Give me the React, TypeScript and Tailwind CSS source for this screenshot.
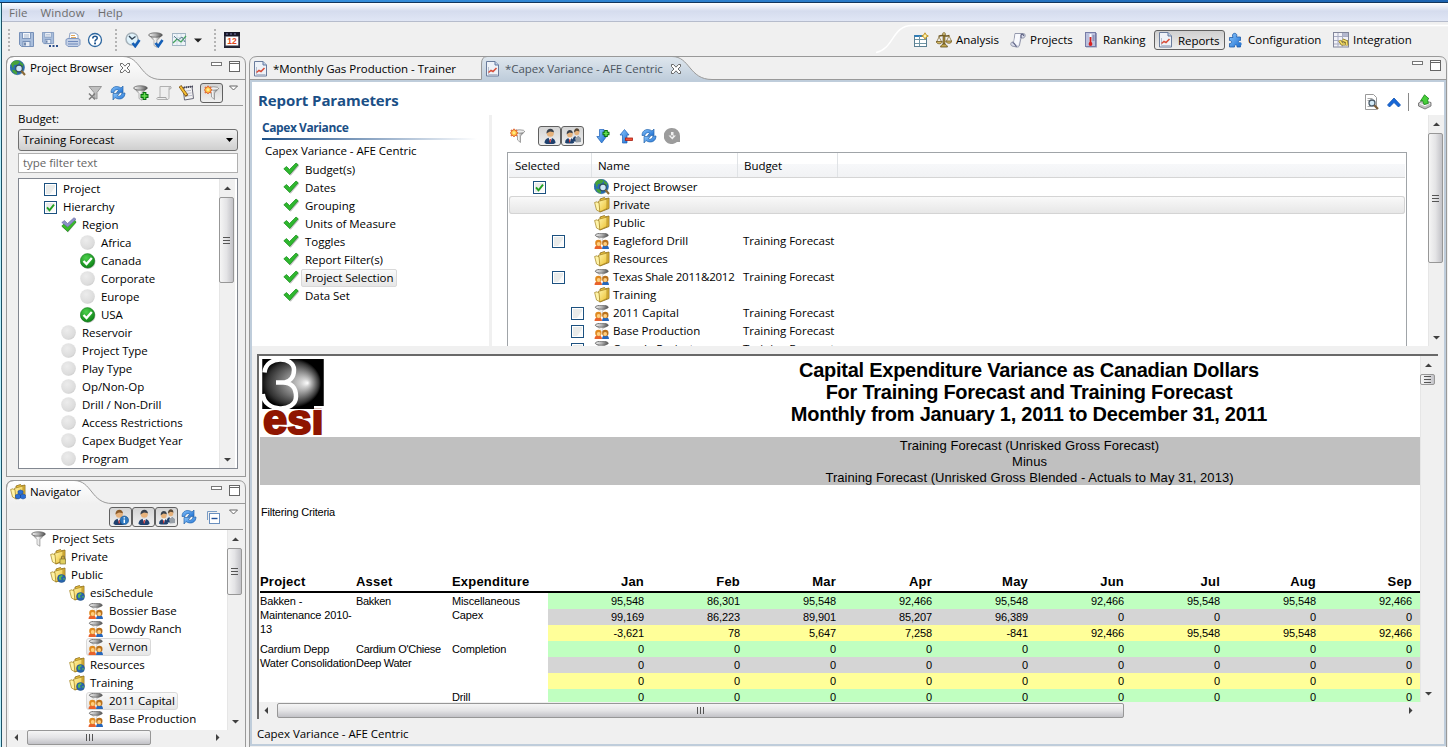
import React from "react";

type Kids = { children?: React.ReactNode };

function Svg({ children, w = 16, h = 16, c = "" }: Kids & { w?: number; h?: number; c?: string }) {
  return (
    <svg width={w} height={h} viewBox={`0 0 ${w} ${h}`} className={`shrink-0 ${c}`}>
      {children}
    </svg>
  );
}

/* ---------- gradients shared by the icons ---------- */
function Defs() {
  return (
    <svg width="0" height="0" className="absolute">
      <defs>
        <linearGradient id="metal" x1="0" x2="1" y1="0" y2="0">
          <stop offset="0" stopColor="#6e6e6e" />
          <stop offset="0.45" stopColor="#fafafa" />
          <stop offset="1" stopColor="#5c5c5c" />
        </linearGradient>
        <linearGradient id="rim" x1="0" x2="1" y1="0" y2="0">
          <stop offset="0" stopColor="#f4f4f4" />
          <stop offset="0.5" stopColor="#b0b0b0" />
          <stop offset="1" stopColor="#505050" />
        </linearGradient>
        <linearGradient id="gold" x1="0" x2="1" y1="0" y2="1">
          <stop offset="0" stopColor="#fff6b0" />
          <stop offset="1" stopColor="#ecc02e" />
        </linearGradient>
        <linearGradient id="blueArrow" x1="0" x2="1" y1="0" y2="1">
          <stop offset="0" stopColor="#8cc8ff" />
          <stop offset="1" stopColor="#1e6fd0" />
        </linearGradient>
        <radialGradient id="grayBall" cx="0.4" cy="0.35" r="0.7">
          <stop offset="0" stopColor="#ececec" />
          <stop offset="0.8" stopColor="#dcdcdc" />
          <stop offset="1" stopColor="#c8c8c8" />
        </radialGradient>
        <radialGradient id="greenBall" cx="0.4" cy="0.3" r="0.8">
          <stop offset="0" stopColor="#4cd04c" />
          <stop offset="1" stopColor="#067a10" />
        </radialGradient>
        <radialGradient id="sphere" cx="0.46" cy="0.48" r="0.5" fx="0.74" fy="0.48">
          <stop offset="0" stopColor="#ffffff" />
          <stop offset="0.15" stopColor="#d0d0d0" />
          <stop offset="0.5" stopColor="#808080" />
          <stop offset="0.85" stopColor="#303030" />
          <stop offset="1" stopColor="#000000" />
        </radialGradient>
        <linearGradient id="tabWhite" x1="0" x2="0" y1="0" y2="1">
          <stop offset="0" stopColor="#ffffff" />
          <stop offset="1" stopColor="#f0f0f0" />
        </linearGradient>
        <linearGradient id="tabBlue" x1="0" x2="0" y1="0" y2="1">
          <stop offset="0" stopColor="#dfe7ee" />
          <stop offset="1" stopColor="#bfcddb" />
        </linearGradient>
        <clipPath id="belowSphere"><rect x="0" y="50.500" width="66" height="28" /></clipPath>
      </defs>
    </svg>
  );
}

/* ---------- icons ---------- */
const FloppyShape = () => (
  <>
    <path d="M.5.5h14v14h-12l-2-2z" fill="#a9bedc" stroke="#7690b8" />
    <rect x="3.500" y=".5" width="8" height="6" fill="#f4f7fb" stroke="#7f98bd" />
    <path d="M5 3h5M5 5h5" stroke="#a9b9d0" />
    <rect x="4" y="9.500" width="7" height="5" fill="#e6ecf5" stroke="#7690b8" />
    <path d="M6 10.500v3" stroke="#4f6c98" strokeWidth="1.500" />
  </>
);
const Save = () => <Svg><FloppyShape /></Svg>;
const SaveAll = () => (
  <Svg>
    <g transform="scale(.8)"><FloppyShape /></g>
    <path d="M7 14h2M10.500 14h2M14 14h2" stroke="#2c4f8c" strokeWidth="1.800" />
  </Svg>
);
const Print = () => (
  <Svg>
    <path d="M4 7L5 1h5l3 2v4" fill="#fff" stroke="#8fa3c4" />
    <path d="M6 3.500h4M6 5.500h5" stroke="#e0a860" />
    <path d="M1 7.500l2-1h10l2 1v5l-2 2H3l-2-2z" fill="#c3d0e6" stroke="#7f97c0" />
    <path d="M3 9.500h10M3 12h10" stroke="#6f8abc" />
  </Svg>
);
const Help = () => (
  <Svg>
    <circle cx="8" cy="8" r="6.500" fill="#fff" stroke="#2d67a0" strokeWidth="1.300" />
    <path d="M5.800 6.400c0-3 4.600-2.800 4.400-.2-.1 1.500-2.200 1.500-2.200 3.300" fill="none" stroke="#1d5590" strokeWidth="1.600" />
    <rect x="7.100" y="10.500" width="1.900" height="1.800" fill="#1d5590" />
  </Svg>
);
const BlueTick = () => <path d="M7.500 11l2.700 3.200L14.500 8" fill="none" stroke="#1560b8" strokeWidth="2.600" />;
const ClockCheck = () => (
  <Svg>
    <circle cx="7" cy="7" r="6" fill="#dff2fb" stroke="#a6b2ba" strokeWidth="1.500" />
    <path d="M4 4l3 3 3.500-2.500" fill="none" stroke="#345" strokeWidth="1.400" />
    <BlueTick />
  </Svg>
);
const FunnelShape = () => (
  <>
    <path d="M.8 3l5.200 5.500v5l3 1.800V8.500L14.200 3z" fill="url(#metal)" stroke="#777" strokeWidth=".5" />
    <ellipse cx="7.500" cy="3" rx="6.800" ry="2.200" fill="url(#rim)" stroke="#555" strokeWidth=".7" />
  </>
);
const FunnelCheck = () => <Svg><FunnelShape /><BlueTick /></Svg>;
const Funnel = () => <Svg><FunnelShape /></Svg>;
const FunnelX = () => (
  <Svg>
    <path d="M2 1.500h12.500L10 7.500V14l-3-1.500V7.500z" fill="#c0c0c0" stroke="#969696" />
    <path d="M2 8.500l6 6M8 8.500l-6 6" stroke="#7e7e7e" strokeWidth="1.600" />
  </Svg>
);
const FunnelPlus = () => (
  <Svg>
    <FunnelShape />
    <path d="M7.500 11h8M11.500 7v8" stroke="#08700f" strokeWidth="3.800" />
    <path d="M8.500 11h6M11.500 8v6" stroke="#66e050" strokeWidth="1.600" />
  </Svg>
);
const FunnelStar = () => (
  <Svg>
    <path d="M3 3.500h11.500L10.500 8v6.500L7.500 12V8z" fill="url(#metal)" stroke="#777" strokeWidth=".6" />
    <ellipse cx="9.500" cy="3.500" rx="5.200" ry="1.700" fill="#ededed" stroke="#666" strokeWidth=".6" />
    <path d="M4 .8l1 1.700 2-.5-.5 2L8 5 6.500 5.800 7 8 5 7.300 4 9 3 7.300 1 8l.5-2.200L.2 5l1.300-1L1 2l2 .5z" fill="#ffc23c" stroke="#e0602c" strokeWidth=".9" />
    <circle cx="4" cy="4.800" r="1.500" fill="#ffe98c" />
  </Svg>
);
const ChartIcon = () => (
  <Svg>
    <rect x="1.500" y="1.500" width="13" height="12" fill="#eef4f8" stroke="#a3b5c4" />
    <path d="M2 5.500h12M2 9.500h12M6 2v11M10 2v11" stroke="#d2dee8" />
    <path d="M2 11l4-4 4 3 5-6" fill="none" stroke="#45a55c" strokeWidth="1.200" />
    <path d="M3 4l4 4 4-3 3 5" fill="none" stroke="#5f7f92" strokeWidth="1" />
  </Svg>
);
const Calendar = () => (
  <Svg>
    <rect x=".5" y=".5" width="15" height="15" fill="#fff" stroke="#1a1a28" />
    <rect x="0" y="0" width="16" height="4.500" fill="#171728" />
    <path d="M0 14.500h16" stroke="#282838" strokeWidth="2" />
    <path d="M1 4v10M15 4v10" stroke="#383848" strokeWidth="1.500" />
    <path d="M2 2h2M6 2h2M10 2h2" stroke="#8080b0" />
    <text x="8" y="12" fontSize="8.500" fontWeight="700" textAnchor="middle" fill="#e2481c" fontFamily="Liberation Sans">12</text>
  </Svg>
);
const GlobeSearch = () => (
  <Svg>
    <circle cx="7.300" cy="7.500" r="7.200" fill="#276cb8" stroke="#225a80" strokeWidth=".5" />
    <path d="M1 4c2-4 7-4.500 9-2L7.500 4.500 4 5l-1 4zM10 1.500l3.500 3-1 3-2.500-2zM2 9.500l5 1v4C4 14 2 12 2 9.500z" fill="#46a23a" />
    <circle cx="9" cy="8.500" r="3.300" fill="#cfe6f5" stroke="#33505e" strokeWidth="1.200" />
    <path d="M11.500 11l3.500 4" stroke="#8a6a38" strokeWidth="2" />
  </Svg>
);
const CloseX = () => (
  <Svg w={12} h={12}>
    <path d="M1.500 1.500h2l2.500 2.700 2.500-2.700h2v2L8 6l2.500 2.500v2h-2L6 7.800l-2.500 2.700h-2v-2L4 6 1.500 3.500z" fill="#fff" stroke="#5a5a5a" strokeWidth=".9" />
  </Svg>
);
const Refresh = () => (
  <Svg>
    <path d="M1 7.500C1 1.500 7 0 11 3L13 1v6.500H6.500L8.700 5.300C7 4 4.500 4.500 4 7.500z" fill="url(#blueArrow)" stroke="#2566ae" strokeWidth=".7" />
    <path d="M15 8c0 6-6 7.500-10 4.500L3 15V8.500h6.500L7.300 10.500C9 12 11.500 11 12 8z" fill="url(#blueArrow)" stroke="#2566ae" strokeWidth=".7" />
  </Svg>
);
const ScrollGray = () => (
  <Svg>
    <path d="M4 1.500h10.500c-1 0-1.500 1-1.500 2v9c0 1.500-1 2-2 2H1.500c-1 0-1-2 .5-2H4z" fill="#eee" stroke="#b0b0b0" />
    <path d="M2 12.500h8c0 1 .5 2 1.500 2M14 1.500c1.500 0 1.500 2.500 0 2.500h-1" fill="none" stroke="#a4a4a4" />
  </Svg>
);
const Notepad = () => (
  <Svg>
    <path d="M4 2.500l9-1 1.500 12-9 1.500z" fill="#f2f2f2" stroke="#667" />
    <path d="M5 2.500l9-1" stroke="#445" strokeWidth="2" strokeDasharray="1 1" />
    <path d="M7 6l5-.6M7.500 8.500l5-.6M8 11l5-.6" stroke="#bbc" />
    <path d="M1 1l7 10" stroke="#7a5010" strokeWidth="3.200" />
    <path d="M1.300 1.500l6 8.500" stroke="#f4bd34" strokeWidth="2" />
  </Svg>
);
const Tick = () => (
  <Svg>
    <path d="M1 8l2.500-2 3 3.200L13 2l2.500 2L7 14z" fill="#888" opacity=".5" transform="translate(.7 .7)" />
    <path d="M.8 7.800l2.700-2.300 3 3L13 2l2.200 1.800L6.700 13.500z" fill="#2eb82e" stroke="#148a18" strokeWidth=".7" />
  </Svg>
);
const RegionTick = () => (
  <Svg>
    <path d="M1 10l2.500-2 3 3L14 4l1.500 1.500L7 15.500z" fill="#888" opacity=".6" />
    <path d="M.8 9l2.700-2.500 3 3.500L13.500 3l1.500 2-8.300 9.500z" fill="#3abb28" stroke="#198818" strokeWidth=".7" />
    <path d="M.8 5.500l2.700-2 3 3L13 .7l2 1.500L6.700 10z" fill="#8b8fc8" stroke="#666aa0" strokeWidth=".6" />
  </Svg>
);
const Ball = () => <Svg><circle cx="7.500" cy="7.500" r="7.300" fill="url(#grayBall)" /></Svg>;
const BallTick = () => (
  <Svg>
    <circle cx="8.200" cy="8.700" r="7.200" fill="#999" opacity=".6" />
    <circle cx="7.500" cy="7.800" r="7.200" fill="url(#greenBall)" stroke="#0a7012" strokeWidth=".5" />
    <path d="M3.500 8l3 3 5.300-6" fill="none" stroke="#fff" strokeWidth="2.300" />
  </Svg>
);
const FolderShape = () => (
  <>
    <path d="M6 2l4.500-1.500 1 1.300 3.500-.8v10.500L6 15z" fill="#e6bd3c" stroke="#8a6a18" strokeWidth=".8" />
    <path d="M4 4.500l9-2.500v9.500L5.500 15z" fill="url(#gold)" stroke="#a08020" strokeWidth=".7" />
    <path d="M.6 5.500l2.400-.7 1 1 1-.3.800 9.200L2.500 13z" fill="#fff4a8" stroke="#a08020" strokeWidth=".7" />
  </>
);
const Folder = () => <Svg><FolderShape /></Svg>;
const FolderLock = () => (
  <Svg>
    <FolderShape />
    <path d="M11.500 10V8.500c0-2 3-2 3 0V10" fill="none" stroke="#8a7a3a" strokeWidth="1.200" />
    <rect x="10" y="10" width="5.500" height="5" fill="#e0cf60" stroke="#7f7030" strokeWidth=".7" />
  </Svg>
);
const FolderGlobe = () => (
  <Svg>
    <FolderShape />
    <circle cx="11.500" cy="11.500" r="4" fill="#2765b0" stroke="#1e4c80" strokeWidth=".5" />
    <path d="M9 9.500l2.500-1.500 1.500 1-2 1.500.5 2.500-2.500-.5zM13 11l2 .5-1 2z" fill="#5bb84a" />
  </Svg>
);
const FolderNav = () => (
  <Svg>
    <FolderShape />
    <path d="M10.500 6l2.500 1v2.500l-2.500 1-2.500-1V7zM8 10l2.500 1v3L8 15l-2.500-1v-3zM13 10l2.500 1v3L13 15l-2.500-1v-3z" fill="#2a6fd6" stroke="#174a9c" strokeWidth=".6" />
  </Svg>
);
const Team = () => (
  <Svg>
    <path d="M1.500 2.500L6 6.500V9h3V6l5-3.500z" fill="url(#metal)" />
    <ellipse cx="7.800" cy="2.200" rx="6.500" ry="2" fill="url(#rim)" stroke="#606060" strokeWidth=".8" />
    <path d="M.5 16c0-5.500 7.500-5.500 7.500 0z" fill="#e8622c" />
    <path d="M8 16c0-5.500 7-5.500 7 0z" fill="#2767bc" />
    <circle cx="4.400" cy="10" r="3.200" fill="#e08a20" />
    <circle cx="11.300" cy="10" r="3.200" fill="#b8701c" />
    <circle cx="4.700" cy="11" r="1.900" fill="#ffcf80" />
    <circle cx="11.200" cy="11" r="1.900" fill="#ffcf80" />
  </Svg>
);
const PersonShape = ({ hair = "#39414c" }: { hair?: string }) => (
  <>
    <path d="M2.500 15c0-7 11-7 11 0l-2 1h-7z" fill="#1f416e" />
    <path d="M6.500 9.500h3.500l-1.500 5z" fill="#fff" />
    <path d="M8 10.500l1 1-.7 3.500-1-1z" fill="#d02525" />
    <circle cx="8.300" cy="5.300" r="3.500" fill="#e6b27c" />
    <path d="M4.500 5.500C4-.5 12-1 12 4.500L11 4 8 3.500l-2 1z" fill={hair} />
  </>
);
const Person = () => <Svg><PersonShape /></Svg>;
const PersonInfo = () => (
  <Svg>
    <g transform="translate(-2)"><PersonShape hair="#8a5a28" /></g>
    <circle cx="11.300" cy="11.300" r="4.300" fill="#2d78c0" stroke="#1a5088" strokeWidth=".6" />
    <path d="M11.300 10.500v3.500M11.300 8.200v1.400" stroke="#fff" strokeWidth="1.500" />
  </Svg>
);
const People = () => (
  <Svg>
    <g transform="translate(5.800 -.2) scale(.72 .85)"><PersonShape hair="#5a4a38" /></g>
    <path d="M10 10l3-2 3 2v4l-5 .5z" fill="#98a0a8" />
    <g transform="translate(-2 1.500) scale(.82 .88)"><PersonShape /></g>
  </Svg>
);
const CollapseAll = () => (
  <Svg>
    <path d="M2.500 11V2.500H12" fill="none" stroke="#7a9cc4" />
    <rect x="4.500" y="4.500" width="10" height="10" fill="#fff" stroke="#6a8fbe" />
    <path d="M6.500 9.500h6" stroke="#1f4f98" strokeWidth="1.400" />
  </Svg>
);
const ReportDoc = () => (
  <Svg>
    <path d="M1.500.5h8.500l3.500 3.500v11H1.500z" fill="#eef2f8" stroke="#6a7c9c" />
    <path d="M10 .5V4h3.500" fill="#c4d2e6" stroke="#6078a0" />
    <path d="M3.500 6v7.500h9" fill="none" stroke="#b4bece" />
    <path d="M3.500 11.500l2.500-2 2 1L11.500 7" fill="none" stroke="#d8503c" strokeWidth="1.600" />
  </Svg>
);
const DownPlus = () => (
  <Svg>
    <path d="M3.500 1.500h4.500v7h2.500L5.700 15 .8 8.500h2.700z" fill="url(#blueArrow)" stroke="#1b5eb8" strokeWidth=".7" />
    <path d="M6.500 5.500h7M10 2v7" stroke="#08700f" strokeWidth="3.600" />
    <path d="M7.500 5.500h5M10 3v5" stroke="#66e050" strokeWidth="1.500" />
  </Svg>
);
const UpMinus = () => (
  <Svg>
    <path d="M5.500 1.500L10 7H8v8H3.500V7H1z" fill="url(#blueArrow)" stroke="#1b5eb8" strokeWidth=".7" />
    <rect x="6.500" y="10" width="7" height="2.500" fill="#f05038" stroke="#a81c10" strokeWidth=".8" />
  </Svg>
);
const GrayDisc = () => (
  <Svg>
    <path d="M8 0a8 8 0 1 0 5 14h3V8a8 8 0 0 0-8-8z" fill="#9c9c9c" />
    <path d="M7 4h2.500v3.500H12l-3.700 4-3.800-4H7z" fill="#efefef" />
    <circle cx="8" cy="8" r=".9" fill="#9c9c9c" />
  </Svg>
);
const DocSearch = () => (
  <Svg>
    <path d="M1.500.5h8l3 3v12h-11z" fill="#fff" stroke="#9a9a9a" />
    <path d="M3.500 4.500h5M3.500 6.500h2M3.500 12.500h3" stroke="#aaa" />
    <circle cx="8" cy="9" r="3" fill="#d4ebf8" stroke="#4a5a68" strokeWidth="1.300" />
    <path d="M10.300 11.300L14 15" stroke="#7a5c38" strokeWidth="2.200" />
  </Svg>
);
const ChevronUp = () => (
  <Svg>
    <path d="M1.500 11L8 4l6.500 7-2 2L8 8.500 3.500 13z" fill="#1668d8" stroke="#0f50b0" strokeWidth=".8" />
  </Svg>
);
const ExportIcon = () => (
  <Svg>
    <path d="M1.500 9l4-2.500 8.500 2v3.500L8 15l-6.500-3z" fill="#c0c0c0" stroke="#666" strokeWidth=".8" />
    <path d="M3 9.500l5 2.200 5-2.700" fill="none" stroke="#fff" />
    <path d="M7.500.8l4.500 4-1.500.7.800 4-4.300 1-1.500-4L3.500 7z" fill="#48cf3a" stroke="#168418" strokeWidth=".8" />
  </Svg>
);
const NewPerspective = () => (
  <Svg>
    <rect x="1.500" y="3.500" width="12" height="11" fill="#fff" stroke="#5a7f92" />
    <path d="M1.500 4h9" stroke="#2f7cb8" strokeWidth="2" />
    <path d="M2 7.500h11M6.500 4v10M2 11.500h4M7 11.500h6" stroke="#6f95a5" />
    <path d="M12 .8l1 2 2.300 1.200-2.300 1.200-1 2-1-2L8.700 4 11 2.800z" fill="#fff4a8" stroke="#c08c18" strokeWidth=".9" />
  </Svg>
);
const Scale = () => (
  <Svg>
    <path d="M7 2h2v10h-2z" fill="#a58a3c" stroke="#5f4a18" strokeWidth=".6" />
    <path d="M2.500 4.500C6 2 10 5 13.500 3.500" fill="none" stroke="#6f5820" strokeWidth="1.500" />
    <path d="M3 5L.8 9.500M3 5l2.500 4.500M13 4l-2.500 5M13 4l2.500 5" fill="none" stroke="#8a7236" strokeWidth=".8" />
    <path d="M0 9.500h6.300c-.5 3-5.500 3-6.300 0zM9.700 9H16c-.5 3-5.500 3-6.300 0z" fill="#d4b964" stroke="#705820" strokeWidth=".8" />
    <path d="M4.500 15c1-4 6-4 7 0z" fill="#c4a850" stroke="#604c18" strokeWidth=".8" />
    <circle cx="8" cy="2" r="1.400" fill="#e6d48a" stroke="#604c18" strokeWidth=".6" />
  </Svg>
);
const ProjectsIcon = () => (
  <Svg>
    <path d="M5 1.500h8.500c2.500 0 2 4.500-.3 4.500H11l-1.500 7c-.4 2-1.500 2.200-3 2L2 14C-.2 13 .8 9.500 3 10l.8.200z" fill="#d9dceb" stroke="#8a8ea4" strokeWidth=".9" />
    <path d="M5.500 2L4 10.500l3 2.500h1.500L10.500 2z" fill="#f8f9fd" />
    <path d="M11 6V3.500c0-2 3-1.500 2.500.5M2.500 10.500c1.800 0 3 3 4 4.300" fill="none" stroke="#5c6080" strokeWidth="1.200" />
  </Svg>
);
const Thermo = () => (
  <Svg>
    <rect x="3" y="1" width="11" height="14.500" fill="#9a9dbc" />
    <rect x="2.500" y=".5" width="10" height="14" fill="#bcc1de" stroke="#777ca6" />
    <rect x="6.500" y="2" width="2" height="8" fill="#fff" />
    <path d="M7.500 5v7" stroke="#d02020" strokeWidth="1.800" />
    <circle cx="7.500" cy="12" r="1.900" fill="#d82020" />
    <path d="M9.500 4h2M9.500 6h2M9.500 8h2" stroke="#4c5080" strokeWidth=".8" />
  </Svg>
);
const Puzzle = () => (
  <Svg>
    <path d="M1.500 5.500H5C2.500 0 10.500 0 8.500 5h4v3.500c-2.500-.8-3 3 0 2.500V15H9c.5-3-3-3-2.500 0H1.500v-3.500c3 .5 2.500-3.500 0-3z" fill="url(#blueArrow)" stroke="#1f5ca8" strokeWidth=".8" />
    <circle cx="12" cy="12" r="1.700" fill="#2f7cd4" />
  </Svg>
);
const IntegrationIcon = () => (
  <Svg>
    <rect x=".5" y=".5" width="15" height="14.500" fill="#f2f2f8" stroke="#82869a" />
    <path d="M1 4.500h14M1 8.500h14M1 12h14M5 1v14M9.500 1v14" stroke="#a8acc2" />
    <rect x="10" y="1" width="5" height="3" fill="#b4b8ce" />
    <path d="M6.500 8.500l2.500 3.500h3M9.500 8l4 1.500.5 4" fill="none" stroke="#84721c" strokeWidth="3" />
    <path d="M6.500 8.500l2.500 3.500h3M9.500 8l4 1.500.5 4" fill="none" stroke="#f4dc6a" strokeWidth="1.600" />
  </Svg>
);

/* ---------- small parts ---------- */
const Check = ({ on = false }: { on?: boolean }) => (
  <Svg w={13} h={13}>
    <rect x=".5" y=".5" width="12" height="12" fill="#fff" stroke="#1c5180" />
    <rect x="2" y="2" width="9" height="9" fill="#e9ebea" />
    <path d="M6 11h5V4z" fill="#fafafa" />
    {on && <path d="M3 6.300l2.500 3L10 3.700" fill="none" stroke="#21a121" strokeWidth="1.900" />}
  </Svg>
);

function Arrow({ dir }: { dir: "up" | "down" | "left" | "right" }) {
  const d = {
    up: "M1 6h7L4.500 2.500z",
    down: "M1 3h7L4.500 6.500z",
    left: "M6 1v7L2.500 4.500z",
    right: "M3 1v7l3.500-3.500z",
  }[dir];
  return <Svg w={9} h={9}><path d={d} fill="#404040" /></Svg>;
}

function VScroll({ c, thumb }: { c: string; thumb: string }) {
  return (
    <div className={`flex shrink-0 flex-col items-start border-l border-[#e6e6e6] bg-[#f0f0f0] ${c}`}>
      <div className="flex h-[18px] shrink-0 items-center pl-[3px]"><Arrow dir="up" /></div>
      <div className={`-ml-px flex w-[15px] shrink-0 flex-col items-center justify-center gap-[2px] rounded-[2px] border border-[#979797] bg-gradient-to-r from-[#f5f5f5] via-[#e4e4e6] to-[#c2c2c7] ${thumb}`}>
        <div className="h-px w-[7px] bg-[#555]" />
        <div className="h-px w-[7px] bg-[#555]" />
        <div className="h-px w-[7px] bg-[#555]" />
      </div>
      <div className="grow" />
      <div className="flex h-[18px] shrink-0 items-center pl-[3px]"><Arrow dir="down" /></div>
    </div>
  );
}

function HScroll({ c, thumb }: { c: string; thumb: string }) {
  return (
    <div className={`flex shrink-0 items-start bg-[#f0f0f0] ${c}`}>
      <div className="flex h-[15px] w-[18px] shrink-0 items-center pl-[3px]"><Arrow dir="left" /></div>
      <div className={`flex h-[15px] shrink-0 items-center justify-center gap-[2px] rounded-[2px] border border-[#979797] bg-gradient-to-b from-[#f5f5f5] via-[#e4e4e6] to-[#c2c2c7] ${thumb}`}>
        <div className="h-[7px] w-px bg-[#555]" />
        <div className="h-[7px] w-px bg-[#555]" />
        <div className="h-[7px] w-px bg-[#555]" />
      </div>
      <div className="grow" />
      <div className="flex h-[15px] w-[18px] shrink-0 items-center pl-[4px]"><Arrow dir="right" /></div>
    </div>
  );
}

const MinMax = () => (
  <div className="flex items-start gap-[7px]">
    <div className="mt-px h-[4px] w-[11px] border border-[#777] bg-white" />
    <div className="h-[11px] w-[11px] border border-[#666] bg-white"><div className="mt-px h-px bg-[#666]" /></div>
  </div>
);

const Triangle = () => (
  <Svg w={11} h={7}><path d="M1.500 1h8l-4 4z" fill="#fff" stroke="#666" /></Svg>
);
const Grip = () => (
  <div className="flex w-[2px] flex-col gap-[2px]">
    {[0, 1, 2, 3, 4, 5].map((i) => <div key={i} className="h-[2px] w-[2px] bg-[#b4b4b4]" />)}
  </div>
);
const Pressed = ({ children }: Kids) => (
  <div className="flex h-[20px] w-[23px] items-center justify-center rounded-[3px] border border-[#606060] bg-gradient-to-b from-[#d4d4d4] to-[#f0f0f0]">{children}</div>
);

function ViewFrame({ icon, title, close, curve, children, c }: Kids & { icon: React.ReactNode; title: string; close?: boolean; curve: string; c: string }) {
  return (
    <section className={`flex w-[240px] shrink-0 flex-col border-x border-[#999] ${c}`}>
      <div className="relative -mx-px h-[24px] shrink-0">
        <svg width="240" height="24" viewBox="0 0 240 24" className="absolute left-0 top-0 bg-[#f0f0f0]">
          <path d={`${curve}V24H.5z`} fill="url(#tabWhite)" />
          <path d={curve} fill="none" stroke="#999" />
          <path d="M.5 24V8Q.5.500 8 .5H232Q239.500.5 239.500 8V24" fill="none" stroke="#999" />
        </svg>
        <div className="relative flex h-[24px] items-center pl-[4px]">
          {icon}
          <span className="ml-[4px] tracking-[-0.13px]">{title}</span>
          {close && <span className="ml-[6px]"><CloseX /></span>}
          <div className="ml-auto mr-[6px] -mt-[4px]"><MinMax /></div>
        </div>
      </div>
      {children}
    </section>
  );
}

/* ---------- data ---------- */
type Tree = { t: string; pad: string; icon: React.ReactNode; hl?: boolean };
const hierarchy: Tree[] = [
  { t: "Project", pad: "pl-[25px]", icon: <span className="mr-px"><Check /></span> },
  { t: "Hierarchy", pad: "pl-[25px]", icon: <span className="mr-px"><Check on /></span> },
  { t: "Region", pad: "pl-[42px]", icon: <RegionTick /> },
  { t: "Africa", pad: "pl-[61px]", icon: <Ball /> },
  { t: "Canada", pad: "pl-[61px]", icon: <BallTick /> },
  { t: "Corporate", pad: "pl-[61px]", icon: <Ball /> },
  { t: "Europe", pad: "pl-[61px]", icon: <Ball /> },
  { t: "USA", pad: "pl-[61px]", icon: <BallTick /> },
  ...["Reservoir", "Project Type", "Play Type", "Op/Non-Op", "Drill / Non-Drill", "Access Restrictions", "Capex Budget Year", "Program"].map((t) => ({
    t, pad: "pl-[42px]", icon: <Ball />,
  })),
];
const navTree: Tree[] = [
  { t: "Project Sets", pad: "pl-[22px]", icon: <Funnel /> },
  { t: "Private", pad: "pl-[41px]", icon: <FolderLock /> },
  { t: "Public", pad: "pl-[41px]", icon: <FolderGlobe /> },
  { t: "esiSchedule", pad: "pl-[60px]", icon: <FolderGlobe /> },
  { t: "Bossier Base", pad: "pl-[79px]", icon: <Team /> },
  { t: "Dowdy Ranch", pad: "pl-[79px]", icon: <Team /> },
  { t: "Vernon", pad: "pl-[79px]", icon: <Team />, hl: true },
  { t: "Resources", pad: "pl-[60px]", icon: <FolderGlobe /> },
  { t: "Training", pad: "pl-[60px]", icon: <FolderGlobe /> },
  { t: "2011 Capital", pad: "pl-[79px]", icon: <Team />, hl: true },
  { t: "Base Production", pad: "pl-[79px]", icon: <Team /> },
];
const HL = "border-[#d9d9d9] bg-gradient-to-b from-[#fafafa] to-[#e6e6e6]";

const steps = ["Budget(s)", "Dates", "Grouping", "Units of Measure", "Toggles", "Report Filter(s)", "Project Selection", "Data Set"];

type Row = { n: string; icon: React.ReactNode; b?: boolean; box?: string; on?: boolean; sel?: boolean; tight?: boolean };
const rows: Row[] = [
  { n: "Project Browser", icon: <GlobeSearch />, box: "pl-[24px]", on: true },
  { n: "Private", icon: <Folder />, sel: true },
  { n: "Public", icon: <Folder /> },
  { n: "Eagleford Drill", icon: <Team />, b: true, box: "pl-[43px]" },
  { n: "Resources", icon: <Folder /> },
  { n: "Texas Shale 2011&2012", icon: <Team />, b: true, box: "pl-[43px]", tight: true },
  { n: "Training", icon: <Folder /> },
  { n: "2011 Capital", icon: <Team />, b: true, box: "pl-[62px]" },
  { n: "Base Production", icon: <Team />, b: true, box: "pl-[62px]" },
  { n: "Canada Projects", icon: <Team />, b: true, box: "pl-[62px]" },
];

const months = ["Jan", "Feb", "Mar", "Apr", "May", "Jun", "Jul", "Aug", "Sep"];
const zeros = ["0", "0", "0", "0", "0", "0", "0", "0", "0"];
const figures = [
  ["95,548", "86,301", "95,548", "92,466", "95,548", "92,466", "95,548", "95,548", "92,466"],
  ["99,169", "86,223", "89,901", "85,207", "96,389", "0", "0", "0", "0"],
  ["-3,621", "78", "5,647", "7,258", "-841", "92,466", "95,548", "95,548", "92,466"],
  zeros, zeros, zeros, zeros,
];
const bands = ["bg-[#c0ffc0]", "bg-[#d5d5d5]", "bg-[#ffff99]"];

/* ---------- sections ---------- */
function TopBar() {
  return (
    <div className="relative flex h-[34px] shrink-0 items-center">
      <svg width="572" height="34" viewBox="0 0 572 34" className="absolute right-0 top-0">
        <path d="M0 30.500C18 27 16 3.500 36 3.500H572" fill="none" stroke="#fff" strokeWidth="1.500" />
      </svg>
      <div className="relative flex w-full items-center pl-[6px] pt-[2px]">
        <Grip />
        <div className="ml-[9px] flex w-[93px] gap-[7px]"><Save /><SaveAll /><Print /><span className="-ml-px"><Help /></span></div>
        <div className="ml-[3px]"><Grip /></div>
        <div className="ml-[8px] flex items-center gap-[7px]">
          <ClockCheck /><FunnelCheck /><ChartIcon />
          <Svg w={8} h={5}><path d="M0 .5h8l-4 4z" fill="#222" /></Svg>
        </div>
        <div className="ml-[12px]"><Grip /></div>
        <div className="ml-[8px]"><Calendar /></div>
        <div className="ml-auto flex w-[535px] items-center">
          <NewPerspective />
          <div className="ml-[7px] flex w-[74px] items-center gap-[4px]"><Scale /><span>Analysis</span></div>
          <div className="flex w-[73px] items-center gap-[4px]"><ProjectsIcon /><span>Projects</span></div>
          <div className="flex w-[71px] items-center gap-[4px]"><Thermo /><span>Ranking</span></div>
          <div className="flex h-[20px] w-[71px] items-center gap-[4px] rounded-[3px] border border-[#606060] bg-gradient-to-b from-[#cfcfcf] to-[#efefef] pl-[3px]"><ReportDoc /><span className="pt-px">Reports</span></div>
          <div className="ml-[3px] flex w-[105px] items-center gap-[4px]"><Puzzle /><span className="tracking-[0px]">Configuration</span></div>
          <div className="flex items-center gap-[4px]"><IntegrationIcon /><span>Integration</span></div>
        </div>
      </div>
    </div>
  );
}

function TreeRow({ n }: { n: Tree }) {
  return (
    <div className={`flex h-[18px] shrink-0 items-center ${n.pad}`}>
      {n.hl ? (
        <div className={`-ml-[2px] flex h-[18px] items-center rounded-[3px] border px-px pr-[2px] ${HL}`}>
          {n.icon}<span className="ml-[5px]">{n.t}</span>
        </div>
      ) : (
        <>{n.icon}<span className="ml-[5px]">{n.t}</span></>
      )}
    </div>
  );
}

function LeftColumn() {
  return (
    <div className="flex w-[244px] shrink-0 flex-col pl-[4px]">
      <ViewFrame c="h-[421px] border-b" icon={<GlobeSearch />} title="Project Browser" close curve="M.5 24V8Q.5.500 8 .5H117C135 .5 134 23.500 155 23.500H239.500">
        <div className="mx-[2px] flex h-[26px] shrink-0 items-center justify-end border-b border-[#999]">
          <div className="flex gap-[7px]"><FunnelX /><Refresh /><FunnelPlus /><ScrollGray /><Notepad /></div>
          <div className="ml-[5px]"><Pressed><FunnelStar /></Pressed></div>
          <div className="-mt-[8px] ml-[5px] mr-[4px]"><Triangle /></div>
        </div>
        <div className="mt-[4px] flex h-[18px] items-center pl-[11px]">Budget:</div>
        <div className="ml-[11px] mt-px flex h-[22px] w-[220px] shrink-0 items-center justify-between rounded-[3px] border border-[#707070] bg-gradient-to-b from-[#f2f2f2] to-[#cfcfcf] pl-[4px] pr-[4px]">
          <span>Training Forecast</span>
          <Svg w={7} h={4}><path d="M0 0h7L3.500 4z" fill="#000" /></Svg>
        </div>
        <div className="ml-[11px] mt-[2px] flex h-[20px] w-[220px] shrink-0 items-center border border-[#b0b0b0] bg-white pb-px pl-[4px] text-[#666]">type filter text</div>
        <div className="ml-[11px] mt-[5px] flex h-[291px] w-[220px] shrink-0 border border-[#828790] bg-white">
          <div className="flex grow flex-col pt-px">
            {hierarchy.map((n) => <TreeRow key={n.t} n={n} />)}
          </div>
          <VScroll c="w-[16px] mr-[2px]" thumb="h-[86px]" />
        </div>
      </ViewFrame>
      <ViewFrame c="mt-[3px] h-[267px]" icon={<FolderNav />} title="Navigator" curve="M.5 24V8Q.5.500 8 .5H68C86 .5 85 23.500 106 23.500H239.500">
        <div className="mx-[2px] flex h-[26px] shrink-0 items-center justify-end border-b border-[#999]">
          <Pressed><PersonInfo /></Pressed><Pressed><Person /></Pressed><Pressed><People /></Pressed>
          <div className="ml-[3px] flex gap-[8px]"><Refresh /><CollapseAll /></div>
          <div className="-mt-[8px] ml-[7px] mr-[4px]"><Triangle /></div>
        </div>
        <div className="mx-[2px] flex h-[200px] shrink-0 bg-white">
          <div className="flex w-[218px] flex-col overflow-hidden">
            {navTree.map((n) => <TreeRow key={n.t} n={n} />)}
          </div>
          <VScroll c="w-[16px]" thumb="h-[47px]" />
        </div>
        <div className="mx-[2px]"><HScroll c="h-[17px] w-[218px]" thumb="w-[124px]" /></div>
      </ViewFrame>
    </div>
  );
}

function Parameters() {
  return (
    <div className="flex h-[264px] shrink-0 flex-col bg-white">
      <div className="flex h-[33px] shrink-0 items-center pl-[6px] pr-[11px] pt-[2px]">
        <h1 className="text-[15px] font-bold tracking-[-0.1px] text-[#1b4f86]">Report Parameters</h1>
        <div className="ml-auto mt-[5px] flex items-center"><DocSearch /><span className="ml-[6px]"><ChevronUp /></span><div className="ml-[6px] mr-[8px] h-[18px] w-px bg-[#888]" /><ExportIcon /></div>
      </div>
      <div className="flex h-[231px]">
        <div className="w-[237px] shrink-0 pl-[10px]">
          <div className="h-[22px] pt-[3px] text-[12px] font-bold leading-[20px] tracking-[-0.42px] text-[#1b4f86]">Capex Variance</div>
          <div className="mt-px h-[2px] w-[215px] bg-gradient-to-r from-[#1b4f86] to-white" />
          <div className="mt-[2px] h-[18px] pl-[3px] leading-[18px]">Capex Variance - AFE Centric</div>
          <div className="flex flex-col pt-px">
            {steps.map((s) => (
              <div key={s} className="flex h-[18px] items-center pl-[21px]">
                <span className="-mt-[2px]"><Tick /></span>
                <div className={`ml-[2px] flex h-[18px] items-center rounded-[2px] border px-[3px] ${s === "Project Selection" ? HL : "border-transparent"}`}>{s}</div>
              </div>
            ))}
          </div>
        </div>
        <div className="w-[3px] shrink-0 bg-[#f0f0f0]" />
        <div className="flex min-w-0 grow flex-col pl-[15px]">
          <div className="flex h-[37px] shrink-0 items-center pl-[3px] pt-[5px]">
            <FunnelStar />
            <div className="ml-[12px] flex"><Pressed><Person /></Pressed><Pressed><People /></Pressed></div>
            <div className="ml-[12px] flex gap-[7px]"><DownPlus /><UpMinus /><span className="-ml-px"><Refresh /></span><GrayDisc /></div>
          </div>
          <div className="flex h-[194px] w-[900px] shrink-0 flex-col overflow-hidden border border-b-0 border-[#a0a4a8] px-px">
            <div className="flex h-[25px] shrink-0 items-center border-b border-[#d5d5d5] bg-gradient-to-b from-white from-45% via-[#f7f8fa] via-46% to-[#f1f2f4]">
              <div className="flex h-full w-[83px] items-center border-r border-[#e0e3e6] pl-[6px] pt-[2px]">Selected</div>
              <div className="flex h-full w-[146px] items-center border-r border-[#e0e3e6] pl-[6px] pt-[2px]">Name</div>
              <div className="flex h-full w-[100px] items-center border-r border-[#e0e3e6] pl-[6px] pt-[2px]">Budget</div>
            </div>
            {rows.map((r) => (
              <div key={r.n} className={`flex h-[18px] shrink-0 items-center rounded-[3px] ${r.sel ? "bg-gradient-to-b from-[#fafafa] to-[#e6e6e6] ring-1 ring-inset ring-[#d4d4d4]" : ""}`}>
                <div className={`w-[85px] ${r.box ?? ""}`}>{r.box && <Check on={r.on} />}</div>
                <span className="-mt-px">{r.icon}</span>
                <span className={`ml-[3px] w-[130px] whitespace-nowrap ${r.tight ? "tracking-[-0.25px]" : ""}`}>{r.n}</span>
                {r.b && <span>Training Forecast</span>}
              </div>
            ))}
          </div>
        </div>
        <VScroll c="w-[16px]" thumb="h-[130px]" />
      </div>
    </div>
  );
}

function Logo() {
  return (
    <svg width="66" height="78" viewBox="0 0 66 78" className="shrink-0">
      <rect x="2.500" y="1" width="61" height="50" fill="#000" />
      <rect x="2.500" y="1" width="61" height="50" fill="url(#sphere)" />
      <path d="M4.500 14.500C6-3 34.500-2 34 12c0 8-5 11.500-9 12.500H16h7c8 0 13 5 13 14C36 55 4 54.500 2.800 36" fill="none" stroke="#fff" strokeWidth="4.500" />
      <rect x="54" y="48" width="10" height="3.500" fill="#fff" />
      <g clipPath="url(#belowSphere)">
        <text x="3" y="75.500" fontFamily="Liberation Sans" fontWeight="700" fontSize="43" textLength="60.500" lengthAdjust="spacingAndGlyphs" fill="#8f1500" stroke="#8f1500" strokeWidth="2.200">esi</text>
      </g>
    </svg>
  );
}

function Report() {
  return (
    <div className="ml-[5px] mt-[8px] flex h-[365px] w-[1181px] shrink-0 flex-col border-l-2 border-t-2 border-[#696969] font-[Liberation_Sans,Arial,sans-serif] tracking-normal">
      <div className="flex h-[346px] shrink-0">
        <div className="flex w-[1161px] shrink-0 flex-col overflow-hidden bg-white pl-px">
          <div className="flex h-[81px] shrink-0 pt-[2px]">
            <Logo />
            <div className="ml-[313px] w-[780px] pt-px text-center text-[20px] font-bold leading-[22px] tracking-[-0.26px]">
              <div>Capital Expenditure Variance as Canadian Dollars</div>
              <div>For Training Forecast and Training Forecast</div>
              <div>Monthly from January 1, 2011 to December 31, 2011</div>
            </div>
          </div>
          <div className="h-[48px] shrink-0 bg-[#c0c0c0] pl-[379px] pt-px text-center text-[13px] leading-[16px] tracking-[0.06px]">
            <div>Training Forecast (Unrisked Gross Forecast)</div>
            <div>Minus</div>
            <div className="h-[15px]">Training Forecast (Unrisked Gross Blended - Actuals to May 31, 2013)</div>
          </div>
          <div className="h-[87px] shrink-0 pl-px pt-[20px] text-[11px] leading-[14px] tracking-[-0.2px]">Filtering Criteria</div>
          <div className="flex h-[21px] shrink-0 border-b-2 border-black text-[13px] font-bold leading-[20px] tracking-[0.2px]">
            <div className="w-[96px]">Project</div>
            <div className="w-[96px]">Asset</div>
            <div className="w-[96px]">Expenditure</div>
            {months.map((m) => <div key={m} className="w-[96px] text-right">{m}</div>)}
          </div>
          <div className="flex h-[112px] shrink-0 text-[11px] leading-[14px] tracking-[-0.15px]">
            <div className="flex w-[96px] flex-col whitespace-nowrap pt-px">
              <div className="h-[48px]">Bakken -<br />Maintenance 2010-<br />13</div>
              <div>Cardium Depp<br />Water Consolidation</div>
            </div>
            <div className="flex w-[96px] flex-col whitespace-nowrap pt-px tracking-[-0.3px]">
              <div className="h-[48px]">Bakken</div>
              <div>Cardium O'Chiese<br />Deep Water</div>
            </div>
            <div className="flex w-[96px] flex-col pt-px">
              <div className="h-[48px]">Miscellaneous<br />Capex</div>
              <div className="h-[48px]">Completion</div>
              <div>Drill</div>
            </div>
            <div className="flex grow flex-col tracking-[-0.1px]">
              {figures.map((f, i) => (
                <div key={i} className={`flex h-[16px] shrink-0 leading-[17px] ${bands[i % 3]}`}>
                  {f.map((v, j) => <div key={j} className="w-[96px] text-right">{v}</div>)}
                </div>
              ))}
            </div>
          </div>
        </div>
        <VScroll c="w-[17px]" thumb="h-[11px]" />
      </div>
      <HScroll c="h-[17px] w-[1161px] pt-px" thumb="w-[847px]" />
    </div>
  );
}

function Editor() {
  return (
    <div className="ml-[3px] flex w-[1198px] shrink-0 flex-col">
      <div className="relative h-[24px] shrink-0">
        <svg width="1198" height="24" viewBox="0 0 1198 24" className="absolute left-0 top-0">
          <path d="M232.500 24V8Q232.500 .5 238 .5H423C441 .5 440 23.500 463 23.500V24z" fill="url(#tabBlue)" />
          <path d="M.5 24V8Q.5.500 8 .5H1190Q1197.500.5 1197.500 8V24M0 23.500H232.500V8Q232.500 .5 238 .5H423C441 .5 440 23.500 463 23.500H1198" fill="none" stroke="#999" />
        </svg>
        <div className="relative flex h-[24px] items-center pl-[4px] pt-px">
          <ReportDoc /><span className="ml-[4px] w-[212px] tracking-[-0.03px]">*Monthly Gas Production - Trainer</span>
          <ReportDoc /><span className="ml-[4px] text-[#4c5560]">*Capex Variance - AFE Centric</span>
          <span className="ml-[7px]"><CloseX /></span>
          <div className="ml-auto mr-[6px] -mt-[6px]"><MinMax /></div>
        </div>
      </div>
      <div className="flex h-[667px] flex-col border-x border-[#999]">
        <div className="flex h-[666px] flex-col border-2 border-[#bfcddb] bg-[#f0f0f0]">
          <Parameters />
          <Report />
          <div className="pl-[5px] pt-[5px] leading-[20px]">Capex Variance - AFE Centric</div>
        </div>
      </div>
    </div>
  );
}

export default function App() {
  return (
    <div className="flex h-[747px] w-[1448px] flex-col overflow-hidden bg-[#f0f0f0] font-[Open_Sans,Noto_Sans,sans-serif] text-[11.5px] leading-[16px] tracking-[-0.04px] text-black">
      <Defs />
      <div className="h-[2px] shrink-0 bg-gradient-to-r from-[#3d9be8] to-[#1c63b0]" />
      <div className="h-px shrink-0 bg-[#12355c]" />
      <div className="flex h-[744px] border-l border-[#b9effc]">
        <div className="flex w-[1447px] flex-col border-l border-[#1d5266]">
          <div className="flex h-[19px] shrink-0 items-center gap-[13px] border-b border-[#b6bccc] bg-gradient-to-b from-white via-[#d5dcee] via-45% to-[#e0e6f5] pl-[7px] pt-px text-[11.5px] tracking-[0.1px] text-[#6d6d6d]">
            <span>File</span><span>Window</span><span>Help</span>
          </div>
          <TopBar />
          <div className="flex h-[691px] overflow-hidden">
            <LeftColumn />
            <Editor />
          </div>
        </div>
      </div>
    </div>
  );
}
